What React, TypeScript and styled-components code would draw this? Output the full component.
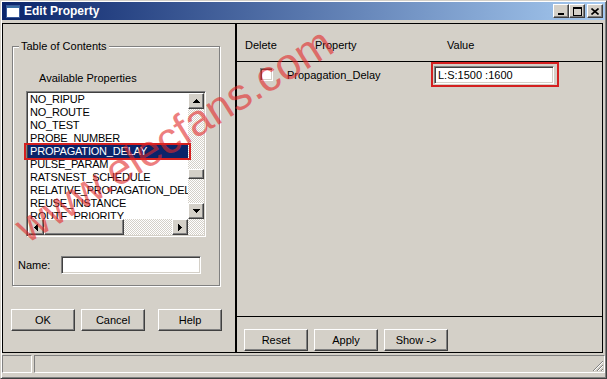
import styled, { createGlobalStyle } from "styled-components";

const GlobalStyle = createGlobalStyle`
  html, body {
    margin: 0;
    padding: 0;
    background: #d4d0c8;
  }
  body {
    font-family: "Liberation Sans", Arial, sans-serif;
    font-size: 11px;
    color: #000;
  }
`;

const properties = [
  "NO_RIPUP",
  "NO_ROUTE",
  "NO_TEST",
  "PROBE_NUMBER",
  "PROPAGATION_DELAY",
  "PULSE_PARAM",
  "RATSNEST_SCHEDULE",
  "RELATIVE_PROPAGATION_DELAY",
  "REUSE_INSTANCE",
  "ROUTE_PRIORITY",
];

const Arrow = ({ dir }: { dir: "up" | "down" | "left" | "right" }) => {
  const pts = {
    up: "3.5,0 7,4 0,4",
    down: "0,0 7,0 3.5,4",
    left: "4,0 4,7 0,3.5",
    right: "0,0 4,3.5 0,7",
  }[dir];
  const vertical = dir === "up" || dir === "down";
  return (
    <svg width={vertical ? 7 : 4} height={vertical ? 4 : 7} shapeRendering="crispEdges">
      <polygon points={pts} fill="#000" />
    </svg>
  );
};

const App: React.FC = () => {
  return (
    <>
      <GlobalStyle />
      <Window>
        <TitleBar>
          <svg width="14" height="13">
            <rect x="0.5" y="0.5" width="13" height="12" fill="#fff" stroke="#3a5a9a" />
            <rect x="1" y="1" width="12" height="2" fill="#3a6ea5" />
          </svg>
          <TitleText>Edit Property</TitleText>
          <CaptionButton>
            <svg width="8" height="7" shapeRendering="crispEdges">
              <rect x="1" y="5" width="6" height="2" fill="#000" />
            </svg>
          </CaptionButton>
          <CaptionButton>
            <svg width="9" height="9" shapeRendering="crispEdges">
              <rect x="0.5" y="0.5" width="8" height="8" fill="none" stroke="#000" />
              <rect x="0" y="0" width="9" height="2" fill="#000" />
            </svg>
          </CaptionButton>
          <CaptionButton $gap={2}>
            <svg width="8" height="7">
              <path d="M0.5 0.5 L7.5 6.5 M7.5 0.5 L0.5 6.5" stroke="#000" strokeWidth="1.6" />
            </svg>
          </CaptionButton>
        </TitleBar>

        <Body>
          <LeftFrame>
            <GroupBox>
              <GroupTitle>Table of Contents</GroupTitle>
              <Caption>Available Properties</Caption>
              <ListBox>
                <Items>
                  {properties.map((p, i) => (
                    <Item key={p} $selected={i === 4}>
                      {p}
                    </Item>
                  ))}
                </Items>
                <VScroll>
                  <ScrollButton>
                    <Arrow dir="up" />
                  </ScrollButton>
                  <Track $vertical>
                    <Thumb style={{ marginTop: 60, height: 10 }} />
                  </Track>
                  <ScrollButton>
                    <Arrow dir="down" />
                  </ScrollButton>
                </VScroll>
                <HScroll>
                  <ScrollButton>
                    <Arrow dir="left" />
                  </ScrollButton>
                  <Track>
                    <Thumb style={{ width: 80 }} />
                  </Track>
                  <ScrollButton>
                    <Arrow dir="right" />
                  </ScrollButton>
                </HScroll>
                <Corner />
                <Highlight />
              </ListBox>
              <NameRow>
                <NameLabel>Name:</NameLabel>
                <TextBox $w={140} />
              </NameRow>
            </GroupBox>
            <ButtonRow $left={8} $top={23}>
              <Button>OK</Button>
              <Button $gap={6}>Cancel</Button>
              <Button $gap={13}>Help</Button>
            </ButtonRow>
          </LeftFrame>

          <RightFrame>
            <Header>
              <HeaderCell $left={8} $w={70}>Delete</HeaderCell>
              <HeaderCell $w={132}>Property</HeaderCell>
              <HeaderCell>Value</HeaderCell>
            </Header>
            <PropRow>
              <CheckBox />
              <PropName>Propagation_Delay</PropName>
              <Marked>
                <TextBox $w={120}>L:S:1500 :1600</TextBox>
              </Marked>
            </PropRow>
            <Spacer />
            <Footer>
              <ButtonRow $left={7} $top={12}>
                <Button>Reset</Button>
                <Button $gap={6}>Apply</Button>
                <Button $gap={6}>Show -&gt;</Button>
              </ButtonRow>
            </Footer>
          </RightFrame>
        </Body>

        <StatusBar>
          <StatusPanel $w={30} />
          <StatusPanel>
            <svg width="12" height="12">
              <path d="M11 1 L1 11 M11 5 L5 11 M11 9 L9 11" stroke="#808080" strokeWidth="1" />
              <path d="M11 2 L2 11 M11 6 L6 11 M11 10 L10 11" stroke="#fff" strokeWidth="1" />
            </svg>
          </StatusPanel>
        </StatusBar>

        <Watermark>www.elecfans.com</Watermark>
      </Window>
    </>
  );
};

export default App;

const raised = `
  border: 1px solid;
  border-color: #fff #404040 #404040 #fff;
  box-shadow: inset -1px -1px #808080, inset 1px 1px #d4d0c8;
  background: #d4d0c8;
`;

const sunken = `
  border: 1px solid;
  border-color: #808080 #fff #fff #808080;
  box-shadow: inset 1px 1px #404040, inset -1px -1px #d4d0c8;
  background: #fff;
`;

const Window = styled.div`
  position: relative;
  width: 607px;
  height: 379px;
  box-sizing: border-box;
  background: #d4d0c8;
  border: 1px solid;
  border-color: #d4d0c8 #404040 #404040 #d4d0c8;
  box-shadow: inset 1px 1px #fff, inset -1px -1px #808080;
  padding: 1px;
  display: flex;
  flex-direction: column;
  overflow: hidden;
`;

const TitleBar = styled.div`
  height: 18px;
  display: flex;
  align-items: center;
  padding: 0 2px;
  background: linear-gradient(90deg, #0a246a, #a6caf0);
  svg {
    display: block;
  }
  > svg {
    margin-left: 2px;
  }
`;

const TitleText = styled.div`
  flex: 1;
  margin-left: 4px;
  color: #fff;
  font-weight: bold;
  font-size: 12px;
`;

const CaptionButton = styled.div<{ $gap?: number }>`
  ${raised}
  box-sizing: border-box;
  width: 16px;
  height: 14px;
  margin-left: ${(p) => p.$gap ?? 0}px;
  display: flex;
  align-items: center;
  justify-content: center;
`;

const Body = styled.div`
  display: flex;
  height: 330px;
  margin: 3px 2px 0 0;
`;

const LeftFrame = styled.div`
  box-sizing: border-box;
  width: 234px;
  border: 1px solid #000;
  display: flex;
  flex-direction: column;
`;

const RightFrame = styled.div`
  box-sizing: border-box;
  flex: 1;
  border: 1px solid #000;
  display: flex;
  flex-direction: column;
`;

const GroupBox = styled.div`
  width: 208px;
  box-sizing: border-box;
  margin: 22px 0 0 9px;
  padding: 0 0 11px;
  border: 1px solid #808080;
  box-shadow: inset 1px 1px #fff, 1px 1px #fff;
  display: flex;
  flex-direction: column;
  align-items: flex-start;
`;

const GroupTitle = styled.div`
  margin: -7px 0 0 6px;
  padding: 0 2px;
  line-height: 13px;
  background: #d4d0c8;
`;

const Caption = styled.div`
  margin: 19px 0 0 26px;
  line-height: 13px;
`;

const ListBox = styled.div`
  ${sunken}
  position: relative;
  box-sizing: border-box;
  width: 180px;
  height: 146px;
  margin: 6px 0 0 13px;
  padding: 1px;
  display: grid;
  grid-template-columns: 1fr 16px;
  grid-template-rows: 1fr 16px;
`;

const Items = styled.div`
  overflow: hidden;
  white-space: nowrap;
`;

const Item = styled.div<{ $selected?: boolean }>`
  height: 13px;
  line-height: 13px;
  padding-left: 2px;
  letter-spacing: -0.2px;
  background: ${(p) => (p.$selected ? "#0a246a" : "transparent")};
  color: ${(p) => (p.$selected ? "#fff" : "#000")};
`;

const hatch = `
  background: repeating-conic-gradient(#d4d0c8 0 25%, #fff 0 50%) 0 0 / 2px 2px;
`;

const VScroll = styled.div`
  display: flex;
  flex-direction: column;
`;

const HScroll = styled.div`
  display: flex;
`;

const ScrollButton = styled.div`
  ${raised}
  box-sizing: border-box;
  width: 16px;
  height: 16px;
  flex: none;
  display: flex;
  align-items: center;
  justify-content: center;
`;

const Track = styled.div<{ $vertical?: boolean }>`
  ${hatch}
  flex: 1;
  display: flex;
  flex-direction: ${(p) => (p.$vertical ? "column" : "row")};
`;

const Thumb = styled.div`
  ${raised}
  box-sizing: border-box;
  flex: none;
  align-self: stretch;
`;

const Corner = styled.div`
  ${hatch}
`;

const Highlight = styled.div`
  position: absolute;
  left: -3px;
  top: 51px;
  width: 167px;
  height: 17px;
  box-sizing: border-box;
  border: 2px solid #d42020;
  pointer-events: none;
`;

const NameRow = styled.div`
  display: flex;
  align-items: center;
  margin-top: 19px;
  padding-left: 5px;
`;

const NameLabel = styled.div`
  width: 43px;
`;

const TextBox = styled.div<{ $w: number }>`
  ${sunken}
  box-sizing: border-box;
  width: ${(p) => p.$w}px;
  height: 18px;
  padding: 0 3px;
  line-height: 16px;
  font-size: 11px;
`;

const ButtonRow = styled.div<{ $left: number; $top: number }>`
  display: flex;
  margin: ${(p) => p.$top}px 0 0 ${(p) => p.$left}px;
`;

const Button = styled.div<{ $gap?: number }>`
  ${raised}
  box-sizing: border-box;
  width: 64px;
  height: 22px;
  margin-left: ${(p) => p.$gap ?? 0}px;
  display: flex;
  align-items: center;
  justify-content: center;
  font-size: 11px;
`;

const Header = styled.div`
  box-sizing: border-box;
  height: 38px;
  padding-top: 15px;
  border-bottom: 1px solid #000;
  display: flex;
  line-height: 13px;
`;

const HeaderCell = styled.div<{ $left?: number; $w?: number }>`
  margin-left: ${(p) => p.$left ?? 0}px;
  width: ${(p) => (p.$w ? `${p.$w}px` : "auto")};
`;

const PropRow = styled.div`
  height: 25px;
  display: flex;
  align-items: center;
`;

const CheckBox = styled.div`
  ${sunken}
  box-sizing: border-box;
  width: 13px;
  height: 13px;
  margin-left: 23px;
`;

const PropName = styled.div`
  width: 144px;
  margin-left: 14px;
`;

const Marked = styled.div`
  align-self: stretch;
  border: 2px solid #d42020;
  padding: 2px 3px 1px 1px;
`;

const Spacer = styled.div`
  flex: 1;
`;

const Footer = styled.div`
  box-sizing: border-box;
  height: 36px;
  border-top: 1px solid #000;
`;

const StatusBar = styled.div`
  display: flex;
  gap: 2px;
  height: 18px;
  margin-top: 2px;
`;

const StatusPanel = styled.div<{ $w?: number }>`
  box-sizing: border-box;
  border: 1px solid;
  border-color: #808080 #fff #fff #808080;
  ${(p) => (p.$w ? `width: ${p.$w}px;` : "flex: 1;")}
  display: flex;
  justify-content: flex-end;
  align-items: flex-end;
  svg {
    display: block;
  }
`;

const Watermark = styled.div`
  position: absolute;
  left: 30px;
  top: 205px;
  font-family: "Liberation Sans", Arial, sans-serif;
  font-size: 44px;
  line-height: 44px;
  white-space: nowrap;
  color: rgba(226, 40, 40, 0.6);
  transform: rotate(-32deg);
  transform-origin: 0 100%;
  pointer-events: none;
`;
